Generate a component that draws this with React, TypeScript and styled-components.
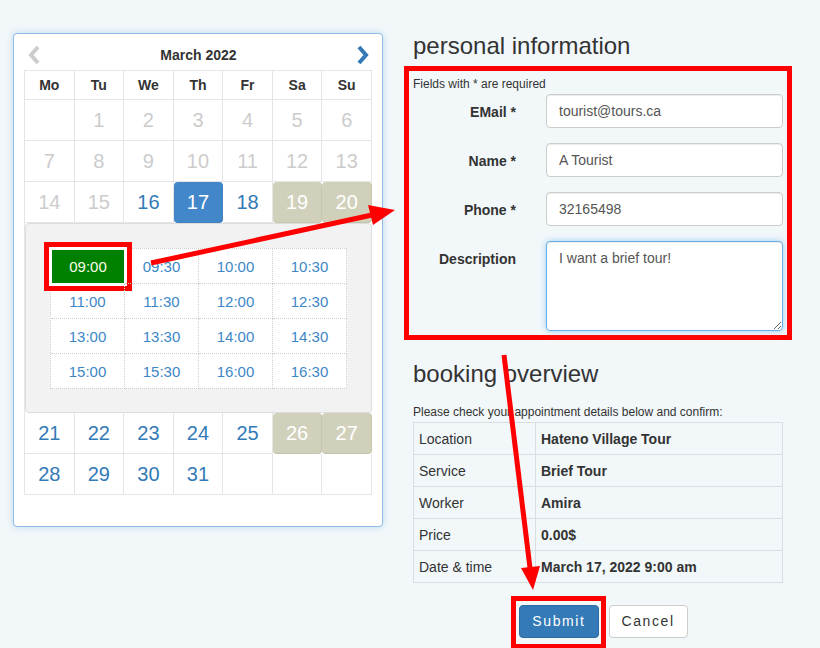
import styled, { createGlobalStyle, css } from "styled-components";

const GlobalStyle = createGlobalStyle`
  html, body {
    margin: 0;
    background: #f2f7fa;
  }
  body {
    font-family: "Liberation Sans", Arial, sans-serif;
    color: #333;
    overflow: hidden;
  }
`;

const Page = styled.div`
  position: relative;
  width: 820px;
  height: 648px;
  box-sizing: border-box;
  padding: 33px 0 0 13px;
  display: flex;
  align-items: flex-start;
  gap: 30px;
`;

const CalendarPanel = styled.div`
  width: 370px;
  height: 494px;
  box-sizing: border-box;
  background: #fff;
  border: 1px solid #8fbde6;
  border-radius: 4px;
  box-shadow: 0 0 6px rgba(66, 139, 202, 0.3);
  padding: 0 10px;
`;

const CalendarHeader = styled.div`
  height: 36px;
  box-sizing: border-box;
  padding: 6px 2px 0 3px;
  display: flex;
  align-items: center;
  justify-content: space-between;
`;

const MonthTitle = styled.div`
  font-size: 14px;
  font-weight: bold;
  color: #333;
`;

const DayGrid = styled.div`
  display: grid;
  grid-template-columns: repeat(7, 1fr);
  border-top: 1px solid #e5e5e5;
  border-left: 1px solid #e5e5e5;
`;

const WeekDay = styled.div`
  height: 29px;
  box-sizing: border-box;
  border-right: 1px solid #e5e5e5;
  border-bottom: 1px solid #e5e5e5;
  display: flex;
  align-items: center;
  justify-content: center;
  font-size: 14px;
  font-weight: bold;
  color: #333;
`;

type Tone = "empty" | "off" | "open" | "picked" | "weekend";

const toneStyles: Record<Tone, ReturnType<typeof css>> = {
  empty: css``,
  off: css`
    color: #cccccc;
  `,
  open: css`
    color: #337ab7;
  `,
  picked: css`
    color: #fff;
    background: #4287c9;
    border-color: #3f82c2;
    border-radius: 4px;
  `,
  weekend: css`
    color: #fff;
    background: #d1d1bb;
    border-color: #c6c6af;
    border-radius: 4px;
  `,
};

const DayCell = styled.div<{ $tone: Tone }>`
  height: 41px;
  box-sizing: border-box;
  border-right: 1px solid #e5e5e5;
  border-bottom: 1px solid #e5e5e5;
  display: flex;
  align-items: center;
  justify-content: center;
  font-size: 20px;
  ${({ $tone }) => toneStyles[$tone]}
`;

const TimePanel = styled.div`
  grid-column: 1 / -1;
  background: #f2f2f2;
  border: 1px solid #dddddd;
  border-radius: 4px;
  padding: 24px 0 23px;
  display: flex;
  justify-content: center;
`;

const SlotGrid = styled.div`
  display: grid;
  grid-template-columns: repeat(4, 74px);
  grid-auto-rows: 35px;
  background: #fff;
  border-top: 1px dotted #cfcfcf;
  border-left: 1px dotted #cfcfcf;
`;

const Slot = styled.div<{ $picked?: boolean }>`
  position: relative;
  box-sizing: border-box;
  border-right: 1px dotted #cfcfcf;
  border-bottom: 1px dotted #cfcfcf;
  display: flex;
  align-items: center;
  justify-content: center;
  font-size: 15px;
  color: #3d87c7;
  ${({ $picked }) =>
    $picked &&
    css`
      background: #008000;
      color: #fdfde8;
      border: 1px dotted #ffffff;
      &::after {
        content: "";
        position: absolute;
        inset: -8px -8px -8px -8px;
        border: 5px solid #ff0000;
        box-shadow: inset 0 0 0 3px #fff;
        pointer-events: none;
      }
    `}
`;

const Column = styled.div`
  width: 370px;
  display: flex;
  flex-direction: column;
`;

const SectionTitle = styled.h2<{ $gap?: number }>`
  margin: ${({ $gap }) => $gap ?? 0}px 0 0;
  font-size: 24px;
  font-weight: normal;
  line-height: 26px;
  color: #333;
`;

const FormBox = styled.div`
  margin: 7px -9px 0;
  border: 5px solid #ff0000;
  padding: 5px 4px 4px;
`;

const Hint = styled.div<{ $gap?: number }>`
  margin-top: ${({ $gap }) => $gap ?? 0}px;
  font-size: 12px;
  line-height: 17px;
  color: #333;
`;

const FormGrid = styled.div`
  margin-top: 1px;
  display: grid;
  grid-template-columns: 133px 237px;
  row-gap: 15px;
`;

const Label = styled.label`
  box-sizing: border-box;
  padding: 8px 30px 0 0;
  text-align: right;
  font-size: 14px;
  line-height: 20px;
  font-weight: bold;
  color: #333;
`;

const fieldBase = css`
  box-sizing: border-box;
  width: 237px;
  padding: 6px 12px;
  font-family: "Liberation Sans", Arial, sans-serif;
  font-size: 14px;
  line-height: 20px;
  color: #555;
  background: #fff;
  border: 1px solid #cccccc;
  border-radius: 4px;
  box-shadow: inset 0 1px 1px rgba(0, 0, 0, 0.075);
  outline: none;
`;

const TextInput = styled.input`
  ${fieldBase}
  height: 34px;
`;

const TextArea = styled.textarea`
  ${fieldBase}
  height: 90px;
  border-color: #66afe9;
  box-shadow: inset 0 1px 1px rgba(0, 0, 0, 0.075),
    0 0 6px rgba(102, 175, 233, 0.6);
  resize: both;
`;

const Overview = styled.table`
  margin-top: 1px;
  width: 370px;
  border-collapse: collapse;
  font-size: 14px;
  color: #333;
`;

const Cell = styled.td<{ $strong?: boolean }>`
  border: 1px solid #d8dee2;
  padding: 6px 5px 5px;
  line-height: 20px;
  font-weight: ${({ $strong }) => ($strong ? "bold" : "normal")};
  &:first-child {
    width: 111px;
  }
`;

const Actions = styled.div`
  margin-top: 22px;
  padding-left: 11px;
  display: flex;
  justify-content: center;
  gap: 10px;
`;

const Button = styled.button<{ $primary?: boolean; $marked?: boolean }>`
  position: relative;
  box-sizing: border-box;
  height: 33px;
  padding: 6px 12px;
  font-family: "Liberation Sans", Arial, sans-serif;
  font-size: 14px;
  line-height: 19px;
  letter-spacing: 1.6px;
  border-radius: 4px;
  border: 1px solid ${({ $primary }) => ($primary ? "#2e6da4" : "#cccccc")};
  background: ${({ $primary }) => ($primary ? "#337ab7" : "#fff")};
  color: ${({ $primary }) => ($primary ? "#fff" : "#333")};
  ${({ $marked }) =>
    $marked &&
    css`
      &::after {
        content: "";
        position: absolute;
        inset: -10px -8px -12px -9px;
        border: 5px solid #ff0000;
        pointer-events: none;
      }
    `}
`;

const Annotations = styled.svg`
  position: absolute;
  left: 0;
  top: 0;
  pointer-events: none;
`;

function Chevron({ dir, color }: { dir: "left" | "right"; color: string }) {
  const pts = dir === "left" ? "11,2 4,10 11,18" : "3,2 10,10 3,18";
  return (
    <svg width="14" height="20" viewBox="0 0 14 20">
      <polyline points={pts} fill="none" stroke={color} strokeWidth="4" />
    </svg>
  );
}

const weekDays = ["Mo", "Tu", "We", "Th", "Fr", "Sa", "Su"];

function toneFor(day: number | null): Tone {
  if (day === null) return "empty";
  if (day < 16) return "off";
  if (day === 17) return "picked";
  if ([19, 20, 26, 27].includes(day)) return "weekend";
  return "open";
}

const weeksBefore: (number | null)[][] = [
  [null, 1, 2, 3, 4, 5, 6],
  [7, 8, 9, 10, 11, 12, 13],
  [14, 15, 16, 17, 18, 19, 20],
];
const weeksAfter: (number | null)[][] = [
  [21, 22, 23, 24, 25, 26, 27],
  [28, 29, 30, 31, null, null, null],
];

const slots = [
  "09:00", "09:30", "10:00", "10:30",
  "11:00", "11:30", "12:00", "12:30",
  "13:00", "13:30", "14:00", "14:30",
  "15:00", "15:30", "16:00", "16:30",
];

const details: [string, string][] = [
  ["Location", "Hateno Village Tour"],
  ["Service", "Brief Tour"],
  ["Worker", "Amira"],
  ["Price", "0.00$"],
  ["Date & time", "March 17, 2022 9:00 am"],
];

function renderWeeks(weeks: (number | null)[][], key: string) {
  return weeks.flatMap((week, w) =>
    week.map((day, d) => (
      <DayCell key={`${key}-${w}-${d}`} $tone={toneFor(day)}>
        {day ?? ""}
      </DayCell>
    ))
  );
}

export default function App() {
  return (
    <>
      <GlobalStyle />
      <Page>
        <CalendarPanel>
          <CalendarHeader>
            <Chevron dir="left" color="#cccccc" />
            <MonthTitle>March 2022</MonthTitle>
            <Chevron dir="right" color="#337ab7" />
          </CalendarHeader>
          <DayGrid>
            {weekDays.map((d) => (
              <WeekDay key={d}>{d}</WeekDay>
            ))}
            {renderWeeks(weeksBefore, "a")}
            <TimePanel>
              <SlotGrid>
                {slots.map((s) => (
                  <Slot key={s} $picked={s === "09:00"}>
                    {s}
                  </Slot>
                ))}
              </SlotGrid>
            </TimePanel>
            {renderWeeks(weeksAfter, "b")}
          </DayGrid>
        </CalendarPanel>

        <Column>
          <SectionTitle>personal information</SectionTitle>
          <FormBox>
            <Hint>Fields with * are required</Hint>
            <FormGrid>
              <Label>EMail *</Label>
              <TextInput defaultValue="tourist@tours.ca" />
              <Label>Name *</Label>
              <TextInput defaultValue="A Tourist" />
              <Label>Phone *</Label>
              <TextInput defaultValue="32165498" />
              <Label>Description</Label>
              <TextArea defaultValue="I want a brief tour!" />
            </FormGrid>
          </FormBox>

          <SectionTitle $gap={21}>booking overview</SectionTitle>
          <Hint $gap={17}>
            Please check your appointment details below and confirm:
          </Hint>
          <Overview>
            <tbody>
              {details.map(([k, v]) => (
                <tr key={k}>
                  <Cell>{k}</Cell>
                  <Cell $strong>{v}</Cell>
                </tr>
              ))}
            </tbody>
          </Overview>
          <Actions>
            <Button $primary $marked>
              Submit
            </Button>
            <Button>Cancel</Button>
          </Actions>
        </Column>

        <Annotations width="820" height="648" viewBox="0 0 820 648">
          <line x1="151" y1="263" x2="372" y2="215" stroke="#ff0000" strokeWidth="5" />
          <polygon points="395,210 368,205 373,225" fill="#ff0000" />
          <line x1="504" y1="355" x2="530" y2="568" stroke="#ff0000" strokeWidth="5" />
          <polygon points="533,590 521,568 540,566" fill="#ff0000" />
        </Annotations>
      </Page>
    </>
  );
}
